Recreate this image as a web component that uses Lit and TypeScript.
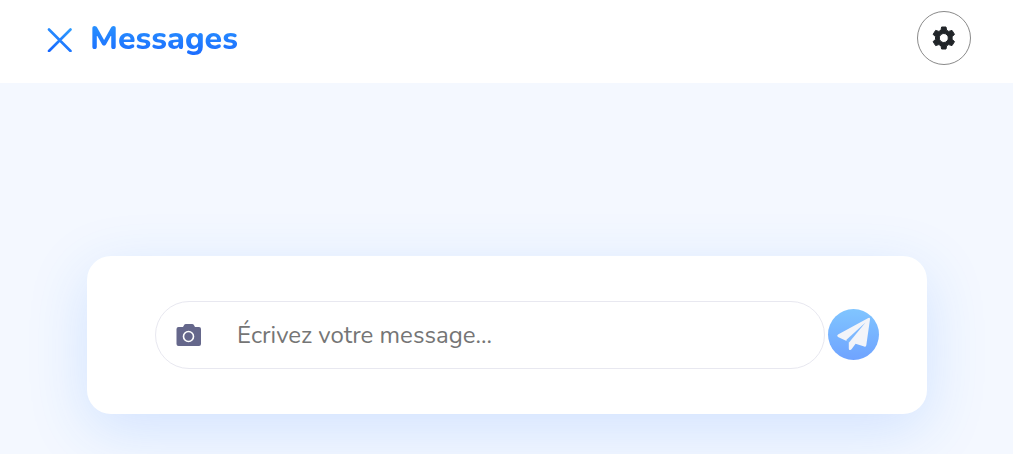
import { LitElement, html, css } from "lit";
import { customElement, state } from "lit/decorators.js";

@customElement("app-root")
export class AppRoot extends LitElement {
  @state() private draft = "";

  static styles = css`
    :host {
      display: flex;
      flex-direction: column;
      min-height: 100vh;
      overflow: hidden;
      background: #f4f8ff;
      color: #212529;
      font-family: Nunito, Lato, sans-serif;
    }
    * {
      box-sizing: border-box;
    }
    button {
      display: flex;
      align-items: center;
      justify-content: center;
      padding: 0;
      border: 0;
      background: none;
      color: inherit;
      cursor: pointer;
    }
    svg {
      display: block;
    }
    header {
      display: flex;
      align-items: center;
      gap: 17px;
      padding: 11px 42px 18px 46px;
      background: #fff;
    }
    h1 {
      flex: 1;
      margin: 0;
      padding-top: 2px;
      font-size: 32px;
      line-height: 40px;
      font-weight: 850;
    }
    .title {
      background: linear-gradient(180deg, #2a9aff, #1a66ff);
      background-clip: text;
      -webkit-background-clip: text;
      color: transparent;
    }
    .settings {
      width: 54px;
      height: 54px;
      border: 1px solid #8a8a8a;
      border-radius: 50%;
    }
    main {
      padding: 173px 86px 40px 87px;
    }
    .composer {
      display: flex;
      align-items: center;
      gap: 3px;
      padding: 45px 48px 45px 68px;
      border-radius: 24px;
      background: #fff;
      box-shadow: 0 16px 60px rgba(40, 125, 255, 0.17);
    }
    .field {
      display: flex;
      align-items: center;
      flex: 1;
      min-width: 0;
      height: 68px;
      padding: 0 32px 0 20px;
      gap: 35px;
      border: 1px solid #e8e8f0;
      border-radius: 34px;
    }
    .camera {
      color: #65678b;
    }
    input {
      flex: 1;
      min-width: 0;
      padding: 0;
      border: 0;
      outline: 0;
      background: none;
      color: #212529;
      font: 400 24px/34px Nunito, Lato, sans-serif;
    }
    input::placeholder {
      color: #757575;
      opacity: 1;
    }
    .send {
      width: 51px;
      height: 51px;
      margin-bottom: 2px;
      border-radius: 50%;
      background: linear-gradient(180deg, #80c5ff, #6fa3ff);
    }
  `;

  private onInput(e: Event) {
    this.draft = (e.target as HTMLInputElement).value;
  }

  private onSubmit(e: Event) {
    e.preventDefault();
    this.draft = "";
  }

  render() {
    return html`
      <header>
        <button class="close" type="button" aria-label="Fermer">
          <svg width="27" height="27" viewBox="0 0 27 27" fill="none">
            <defs>
              <linearGradient id="blue" gradientUnits="userSpaceOnUse" x1="20" y1="0" x2="7" y2="27">
                <stop stop-color="#2f9fff" />
                <stop offset="1" stop-color="#1768ff" />
              </linearGradient>
            </defs>
            <path d="M3 4.500 24.500 26M24.500 4.500 3 26" stroke="url(#blue)" stroke-width="2.600" stroke-linecap="round" />
          </svg>
        </button>
        <h1><span class="title">Messages</span></h1>
        <button class="settings" type="button" aria-label="Paramètres">
          <svg width="24" height="24" viewBox="0 0 24 24" fill="currentColor" stroke="currentColor" stroke-linejoin="round">
            <path
              fill-rule="evenodd"
              d="M9.600 1h4.400l.6 3.200 2.100 1.200 3.300-1 2.500 4-2.400 2.200v2.800l2.400 2.200-2.500 4-3.300-1-2.100 1.200-.6 3.200H9.600l-.6-3.200-2.100-1.200-3.300 1-2.500-4 2.400-2.200v-2.800L1.100 8.400l2.500-4 3.300 1L9 4.200zM11.800 7.500a4.500 4.500 0 1 0 0 9 4.500 4.500 0 0 0 0-9z"
            />
          </svg>
        </button>
      </header>
      <main>
        <form class="composer" @submit=${this.onSubmit}>
          <div class="field">
            <button class="camera" type="button" aria-label="Ajouter une photo">
              <svg width="26" height="22" viewBox="0 0 26 22">
                <path
                  fill="currentColor"
                  d="M2.500 3H7L8 1.200Q8.500 0 10 0h6q1.500 0 2 1.200L19 3h4q2 0 2 2v15q0 2-2 2H2.500Q.5 22 .5 20V5Q.5 3 2.500 3z"
                />
                <circle cx="12.500" cy="12.500" r="5" fill="none" stroke="#fff" stroke-width="1.600" />
              </svg>
            </button>
            <input
              type="text"
              aria-label="Message"
              placeholder="Écrivez votre message..."
              .value=${this.draft}
              @input=${this.onInput}
            />
          </div>
          <button class="send" type="submit" aria-label="Envoyer">
            <svg width="51" height="51" viewBox="0 0 51 51">
              <path
                fill="#f2f4f9"
                d="M40.300 9Q42.300 8 42 10.300L38.300 36.300Q38 38.300 36.200 37.500L27.600 34.800 23.500 40.200Q20.800 42.300 20.800 39.500V32.500L17.500 31.500 10 28Q8.300 26.800 10 25.500z"
              />
              <path d="M37.500 13.500 18.500 30.800V32.200L21 33.500z" fill="#7db8ff" />
            </svg>
          </button>
        </form>
      </main>
    `;
  }
}
